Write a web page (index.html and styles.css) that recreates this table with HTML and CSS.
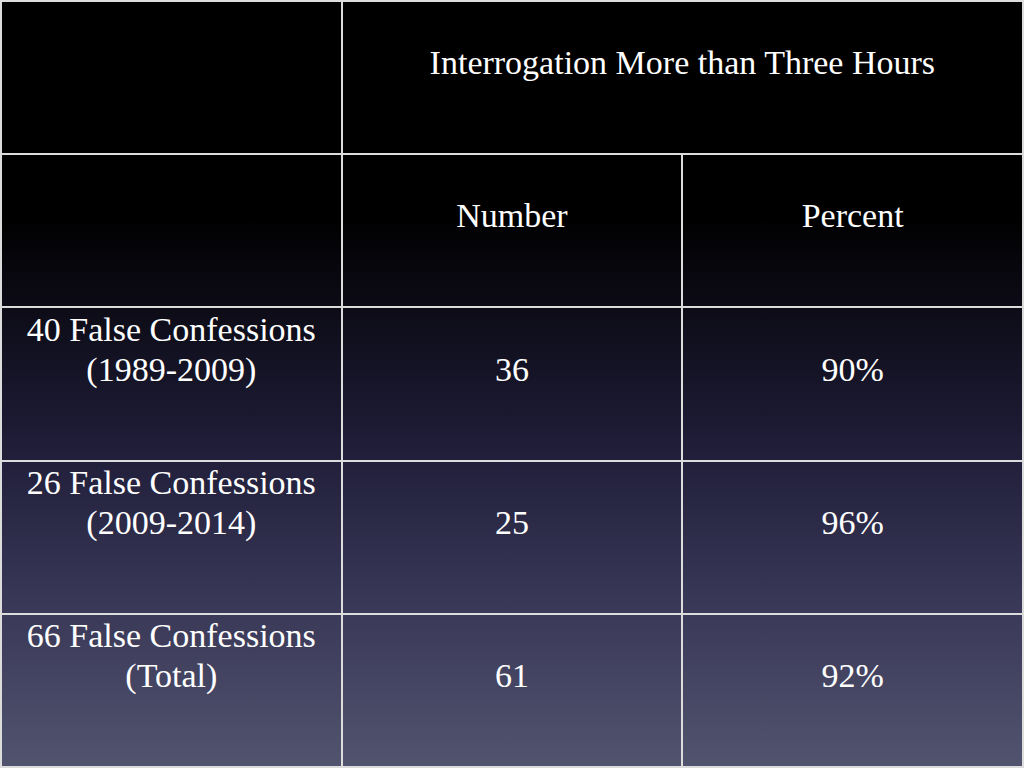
FILE: index.html
```html
<!DOCTYPE html>
<html>
<head>
<meta charset="utf-8">
<link rel="stylesheet" href="styles.css">
</head>
<body>
<table class="grid">
  <colgroup>
    <col class="col">
    <col class="col">
    <col class="col">
  </colgroup>
  <tr>
    <td class="cell"></td>
    <td class="cell" colspan="2">Interrogation More than Three Hours</td>
  </tr>
  <tr>
    <td class="cell"></td>
    <td class="cell">Number</td>
    <td class="cell">Percent</td>
  </tr>
  <tr>
    <td class="cell">40 False Confessions<br>(1989-2009)</td>
    <td class="cell">36</td>
    <td class="cell">90%</td>
  </tr>
  <tr>
    <td class="cell">26 False Confessions<br>(2009-2014)</td>
    <td class="cell">25</td>
    <td class="cell">96%</td>
  </tr>
  <tr>
    <td class="cell">66 False Confessions<br>(Total)</td>
    <td class="cell">61</td>
    <td class="cell">92%</td>
  </tr>
</table>
</body>
</html>
```
FILE: styles.css
```css
html, body {
  margin: 0;
  padding: 0;
  width: 1024px;
  height: 768px;
  overflow: hidden;
}
body {
  background: linear-gradient(to bottom, #000 0%, #000 28%, #1f1d38 58%, #383756 78%, #52546f 100%);
  font-family: "Liberation Serif", serif;
  color: #fff;
}
.grid {
  width: 1024px;
  height: 768px;
  border-collapse: collapse;
  table-layout: fixed;
  border: 1px solid #c8c8c8;
}
.col {
  width: 33.333%;
}
.cell {
  height: 153px;
  box-sizing: border-box;
  border: 2px solid #dcdcdc;
  text-align: center;
  vertical-align: bottom;
  padding: 0 4px 70px;
  font-family: "Liberation Serif", serif;
  font-size: 34px;
  line-height: 40px;
  color: #fff;
}
```
